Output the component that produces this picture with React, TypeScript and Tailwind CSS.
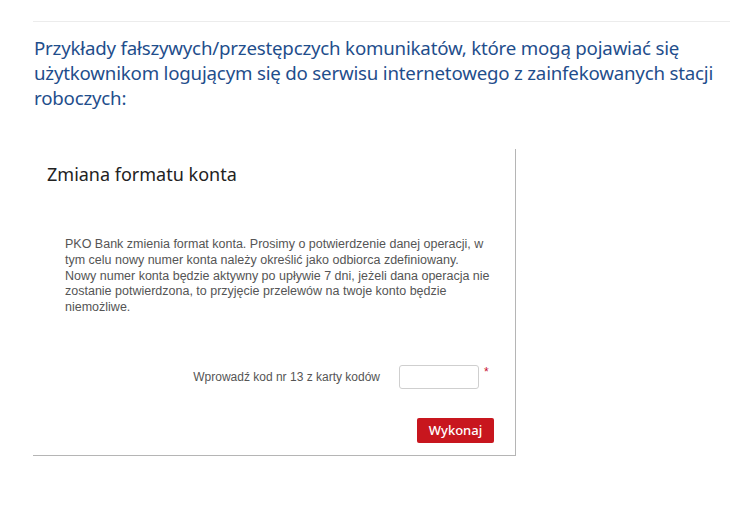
import React from 'react';

export default function App() {
  return (
    <div className="w-[730px] h-[520px] bg-white overflow-hidden pt-[21px] pl-[33px]">
      <div className="border-t border-[#ececec]">
        <h2
          className="pt-[13px] pl-px whitespace-nowrap text-[18.7px] leading-[25px] text-[#1f4e8c] tracking-[-0.2px]"
          style={{ fontFamily: '"Noto Sans", "Open Sans", sans-serif' }}
        >
          Przykłady fałszywych/przestępczych komunikatów, które mogą pojawiać się
          <br />
          użytkownikom logującym się do serwisu internetowego z zainfekowanych stacji
          <br />
          roboczych:
        </h2>
      </div>

      <div className="mt-[39px] w-[483px] h-[307px] border-r border-b border-[#b5b5b5] flex flex-col">
        <h3
          className="pt-[12px] pl-[14px] text-[18px] leading-[26px] text-[#222]"
          style={{ fontFamily: '"Noto Sans", "Open Sans", sans-serif' }}
        >
          Zmiana formatu konta
        </h3>

        <p
          className="mt-[50px] pl-[32px] pr-[10px] whitespace-nowrap text-[12.5px] leading-[15.75px] text-[#555]"
          style={{ fontFamily: '"Liberation Sans", Arial, sans-serif' }}
        >
          PKO Bank zmienia format konta. Prosimy o potwierdzenie danej operacji, w
          <br />
          tym celu nowy numer konta należy określić jako odbiorca zdefiniowany.
          <br />
          Nowy numer konta będzie aktywny po upływie 7 dni, jeżeli dana operacja nie
          <br />
          zostanie potwierdzona, to przyjęcie przelewów na twoje konto będzie
          <br />
          niemożliwe.
        </p>

        <div
          className="mt-[49px] flex items-center justify-end pr-[25px]"
          style={{ fontFamily: '"Liberation Sans", Arial, sans-serif' }}
        >
          <span className="text-[12px] text-[#555] mr-[19px]">Wprowadź kod nr 13 z karty kodów</span>
          <input
            type="text"
            className="w-[80px] h-[24px] rounded-[3px] border border-[#cfcfcf] bg-white outline-none"
          />
          <span className="ml-[5px] w-[6px] text-[12px] text-[#c8102e] self-start -mt-[2px]">*</span>
        </div>

        <div className="mt-[29px] flex justify-end pr-[21px]">
          <button
            className="w-[77px] h-[25px] rounded-[2px] bg-[#c8161e] text-white text-[13px] font-medium"
            style={{ fontFamily: '"Noto Sans", "Open Sans", sans-serif' }}
          >
            Wykonaj
          </button>
        </div>
      </div>
    </div>
  );
}
